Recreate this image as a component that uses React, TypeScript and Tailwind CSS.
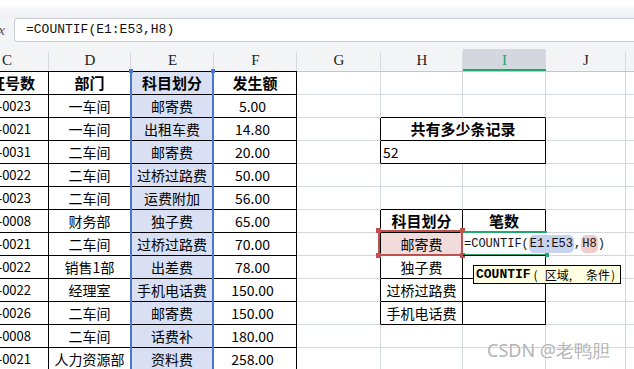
import clsx from 'clsx'

const HEAD = ['凭证号数', '部门', '科目划分', '发生额']

const ROWS: [string, string, string, string][] = [
  ['-0023', '一车间', '邮寄费', '5.00'],
  ['-0021', '一车间', '出租车费', '14.80'],
  ['-0031', '二车间', '邮寄费', '20.00'],
  ['-0022', '二车间', '过桥过路费', '50.00'],
  ['-0023', '二车间', '运费附加', '56.00'],
  ['-0008', '财务部', '独子费', '65.00'],
  ['-0021', '二车间', '过桥过路费', '70.00'],
  ['-0022', '销售1部', '出差费', '78.00'],
  ['-0022', '经理室', '手机电话费', '150.00'],
  ['-0026', '二车间', '邮寄费', '150.00'],
  ['-0008', '二车间', '话费补', '180.00'],
  ['-0021', '人力资源部', '资料费', '258.00'],
]

const COLS = ['C', 'D', 'E', 'F', 'G', 'H', 'I', 'J', '']

// border helper: right / bottom black or light grid line
function bd(r: boolean, b: boolean) {
  return clsx(
    'border-r border-b',
    r ? 'border-r-black' : 'border-r-[#d3d7df]',
    b ? 'border-b-black' : 'border-b-[#d3d7df]',
  )
}

const mono = "font-['Liberation_Mono',monospace]"

function RightCells({ row }: { row: number }) {
  // columns G, H, I, J, K for spreadsheet row `row` (1-based)
  const gBlack = row === 3 || row === 4 || (row >= 7 && row <= 11)
  const g = <div className={bd(gBlack, false)} />
  const tail = (
    <>
      <div className={bd(false, false)} />
      <div className="border-b border-b-[#d3d7df]" />
    </>
  )

  if (row === 3 || row === 4) {
    return (
      <>
        {g}
        <div
          className={clsx(
            bd(true, true),
            'col-span-2 flex items-center',
            row === 3 ? 'justify-center text-[15px] font-bold' : 'pl-[2px] text-[14px]',
          )}
        >
          {row === 3 ? '共有多少条记录' : '52'}
        </div>
        {tail}
      </>
    )
  }

  if (row === 8) {
    return (
      <>
        {g}
        <div className={clsx(bd(true, true), 'flex items-center justify-center bg-[#f2dcdb] text-[14px]')}>
          邮寄费
        </div>
        {/* formula text runs on over column J */}
        <div className="relative z-10 flex items-center overflow-visible border-b border-r border-b-black border-r-transparent pl-[1px]">
          <div className={clsx(mono, 'flex items-center whitespace-nowrap text-[12px] text-[#111]')}>
            =COUNTIF(
            <span className="rounded-[5px] bg-[#c8d3f0] px-[1px]">E1:E53</span>,
            <span className="rounded-[5px] bg-[#f1cccb] px-[1px]">H8</span>)
          </div>
        </div>
        {tail}
      </>
    )
  }

  const labels: Record<number, [string, string]> = {
    7: ['科目划分', '笔数'],
    9: ['独子费', ''],
    10: ['过桥过路费', ''],
    11: ['手机电话费', ''],
  }
  const inBox = row >= 7 && row <= 11
  const bBlack = inBox || row === 2 || row === 6
  const lab = labels[row]
  return (
    <>
      {g}
      <div
        className={clsx(
          bd(inBox, bBlack),
          'flex items-center justify-center',
          row === 7 ? 'text-[15px] font-bold' : 'text-[14px]',
        )}
      >
        {lab?.[0]}
      </div>
      <div className={clsx(bd(inBox, bBlack), 'flex items-center justify-center text-[15px] font-bold')}>
        {lab?.[1]}
      </div>
      {tail}
    </>
  )
}

export default function App() {
  return (
    <div className="relative h-[369px] w-[634px] overflow-hidden bg-white font-['Noto_Sans_CJK_SC',sans-serif] text-black">
      {/* toolbar remnant */}
      <div className="h-[6px] bg-white" />
      <div className="h-[12px] bg-gradient-to-b from-[#f8f9fa] to-[#eef0f2]" />

      {/* formula bar */}
      <div className="flex h-[24px] bg-[#f3f4f6]">
        <div className="flex w-[14px] items-center overflow-hidden">
          <span className="ml-[-6px] font-['Liberation_Serif',serif] text-[15px] italic text-[#555]">fx</span>
        </div>
        <div
          className={clsx(
            mono,
            'flex flex-1 items-center rounded-l-[4px] border border-r-0 border-[#c9ccd4] bg-white pl-[11px] text-[13px] text-[#111]',
          )}
        >
          =COUNTIF(E1:E53,H8)
        </div>
      </div>
      <div className="h-[7px] bg-[#f3f4f6]" />

      {/* sheet */}
      <div className="relative">
        <div className="grid auto-rows-[23px] grid-cols-[49px_82px_83px_83px_84px_82px_83px_80px_1fr]">
          {/* column letters */}
          {COLS.map((c, i) => (
            <div
              key={c + i}
              className={clsx(
                'relative flex items-center border-b font-["Liberation_Serif",serif] text-[15px]',
                i < 4 ? 'border-b-black' : 'border-b-[#c2c6ce]',
                c === 'I' ? 'bg-[#d4d7de] text-[#21a366]' : 'bg-[#f3f4f6] text-[#222]',
                i === 0 ? 'justify-end pr-[37px]' : 'justify-center',
              )}
            >
              {c}
              {i < 8 && <div className="absolute bottom-0 right-0 top-[3px] w-px bg-[#d6d9df]" />}
              {c === 'I' && <div className="absolute inset-x-0 bottom-0 h-[2px] bg-[#22a86e]" />}
            </div>
          ))}

          {/* row 1: table head */}
          {HEAD.map((h, i) => (
            <div
              key={h}
              className={clsx(
                bd(true, true),
                'flex items-center overflow-hidden whitespace-nowrap text-[15px] font-bold',
                i === 0 ? 'justify-end pr-[13px]' : 'justify-center',
                i === 2 && 'bg-[#dae0f3]',
              )}
            >
              {h}
            </div>
          ))}
          <RightCells row={1} />

          {ROWS.map((r, ri) => (
            <div key={ri} className="contents">
              {r.map((v, i) => (
                <div
                  key={i}
                  className={clsx(
                    bd(true, true),
                    'flex items-center overflow-hidden whitespace-nowrap',
                    i === 0 ? 'justify-end pr-[17px] text-[13px]' : 'justify-center text-[14px]',
                    i === 2 && 'bg-[#dae0f3]',
                    i === 3 && 'pr-[5px]',
                  )}
                >
                  {v}
                </div>
              ))}
              <RightCells row={ri + 2} />
            </div>
          ))}
        </div>

        {/* E1:E53 reference highlight */}
        <div className="pointer-events-none absolute left-[130px] top-[22px] h-[320px] w-[84px] border-x-2 border-[#4a76d4]">
          <div className="absolute -left-[3px] -top-[2px] h-[4px] w-[4px] bg-[#4a76d4]" />
          <div className="absolute -right-[3px] -top-[2px] h-[4px] w-[4px] bg-[#4a76d4]" />
        </div>

        {/* H8 reference highlight */}
        <div className="pointer-events-none absolute left-[378px] top-[181px] h-[26px] w-[85px] border-2 border-[#c0504d]">
          <div className="absolute -left-[4px] -top-[4px] h-[5px] w-[5px] bg-[#c0504d]" />
          <div className="absolute -right-[4px] -top-[4px] h-[5px] w-[5px] bg-[#c0504d]" />
          <div className="absolute -bottom-[4px] -left-[4px] h-[5px] w-[5px] bg-[#c0504d]" />
          <div className="absolute -bottom-[4px] -right-[4px] h-[5px] w-[5px] bg-[#c0504d]" />
        </div>

        {/* active cell I8 */}
        <div className="pointer-events-none absolute left-[464px] top-[182px] h-[25px] w-[83px] border-y-2 border-[#22a86e]">
          <div className="absolute -bottom-[3px] -right-[2px] h-[4px] w-[4px] bg-[#22a86e]" />
        </div>

        {/* function hint */}
        <div className="absolute left-[473px] top-[216px] z-20 flex h-[19px] w-[148px] items-center whitespace-nowrap border border-black bg-[#ffffe1] pl-[2px] text-[12px]">
          <span className={clsx(mono, 'text-[13px] font-bold')}>COUNTIF</span>
          <span className="ml-[3px]">(</span>
          <span className="ml-[7px]">区域,</span>
          <span className="ml-[14px]">条件</span>
          <span className="ml-[1px]">)</span>
        </div>
      </div>

      {/* watermark */}
      <div className="absolute left-[487px] top-[337px] font-['Noto_Sans',sans-serif] text-[18px] text-[#b3b3b3] [text-shadow:0_0_1px_#fff]">
        CSDN @老鸭胆
      </div>
    </div>
  )
}
